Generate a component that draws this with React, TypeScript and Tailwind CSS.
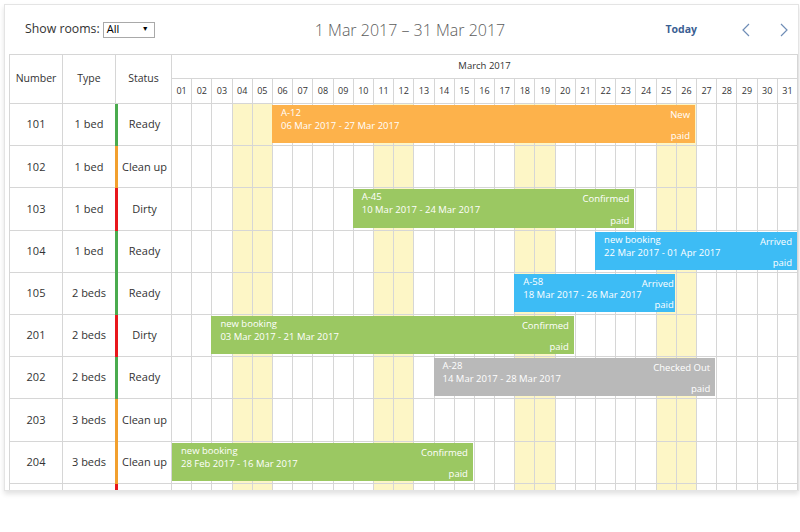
import React from 'react';

type Tone = 'orange' | 'green' | 'blue' | 'gray';
type Status = 'Ready' | 'Clean up' | 'Dirty';

interface Booking {
  title: string;
  dates: string;
  start: number; // first day of March (0 = Feb 28)
  end: number; // checkout day, exclusive (32 = Apr 1)
  label: string;
  tone: Tone;
}

interface Room {
  number: string;
  type: string;
  status: Status;
  booking?: Booking;
  hideText?: boolean;
}

const DAYS = Array.from({ length: 31 }, (_, i) => i + 1);
const WEEKEND = new Set([4, 5, 11, 12, 18, 19, 25, 26]);
const TIMELINE_W = 626;
const DAY_W = TIMELINE_W / 31;

const toneClass: Record<Tone, string> = {
  orange: 'bg-[#fdb24b]',
  green: 'bg-[#9bc862]',
  blue: 'bg-[#3dbcf5]',
  gray: 'bg-[#b9b9b9]',
};

const statusBar: Record<Status, string> = {
  Ready: 'bg-[#4aab4e]',
  'Clean up': 'bg-[#f2a02e]',
  Dirty: 'bg-[#e8171c]',
};

const rooms: Room[] = [
  { number: '101', type: '1 bed', status: 'Ready', booking: { title: 'A-12', dates: '06 Mar 2017 - 27 Mar 2017', start: 6, end: 27, label: 'New', tone: 'orange' } },
  { number: '102', type: '1 bed', status: 'Clean up' },
  { number: '103', type: '1 bed', status: 'Dirty', booking: { title: 'A-45', dates: '10 Mar 2017 - 24 Mar 2017', start: 10, end: 24, label: 'Confirmed', tone: 'green' } },
  { number: '104', type: '1 bed', status: 'Ready', booking: { title: 'new booking', dates: '22 Mar 2017 - 01 Apr 2017', start: 22, end: 32, label: 'Arrived', tone: 'blue' } },
  { number: '105', type: '2 beds', status: 'Ready', booking: { title: 'A-58', dates: '18 Mar 2017 - 26 Mar 2017', start: 18, end: 26, label: 'Arrived', tone: 'blue' } },
  { number: '201', type: '2 beds', status: 'Dirty', booking: { title: 'new booking', dates: '03 Mar 2017 - 21 Mar 2017', start: 3, end: 21, label: 'Confirmed', tone: 'green' } },
  { number: '202', type: '2 beds', status: 'Ready', booking: { title: 'A-28', dates: '14 Mar 2017 - 28 Mar 2017', start: 14, end: 28, label: 'Checked Out', tone: 'gray' } },
  { number: '203', type: '3 beds', status: 'Clean up' },
  { number: '204', type: '3 beds', status: 'Clean up', booking: { title: 'new booking', dates: '28 Feb 2017 - 16 Mar 2017', start: 0, end: 16, label: 'Confirmed', tone: 'green' } },
  // scrolled past the bottom edge, only the top sliver shows
  { number: '205', type: '3 beds', status: 'Dirty', hideText: true },
];

const Chevron = ({ dir }: { dir: 'left' | 'right' }) => (
  <svg width="10" height="14" viewBox="0 0 10 14" fill="none">
    <polyline
      points={dir === 'left' ? '8,1 2,7 8,13' : '2,1 8,7 2,13'}
      stroke="#6f8db6"
      strokeWidth="1.2"
      strokeLinejoin="miter"
    />
  </svg>
);

const BookingBar = ({ b }: { b: Booking }) => {
  const left = b.start < 1 ? 0 : (b.start - 1) * DAY_W - 1;
  const right = b.end > 31 ? TIMELINE_W - 1 : (b.end - 1) * DAY_W - 2;
  return (
    <div
      className={`absolute top-[1px] bottom-[3px] z-10 flex justify-between overflow-hidden pl-[9px] pr-[5px] text-[9.5px] leading-[13px] text-white ${toneClass[b.tone]}`}
      style={{ left, width: right - left }}
    >
      <div className="whitespace-nowrap pt-[1px]">
        <div>{b.title}</div>
        <div>{b.dates}</div>
      </div>
      <div className="flex flex-col items-end justify-between whitespace-nowrap pb-[1px] pt-[3px]">
        <div>{b.label}</div>
        <div>paid</div>
      </div>
    </div>
  );
};

const RoomRow = ({ room }: { room: Room }) => (
  <div className="flex h-[42.2px] shrink-0 text-[11px] text-[#333]">
    <div className="flex w-[53px] items-center justify-center border-b border-r border-[#d6d6d6]">
      {!room.hideText && room.number}
    </div>
    <div className="flex w-[52px] items-center justify-center border-b border-[#d6d6d6]">
      {!room.hideText && room.type}
    </div>
    <div className="flex w-[57px]">
      <div className={`w-[3px] ${statusBar[room.status]}`} />
      <div className="flex flex-1 items-center justify-center whitespace-nowrap border-b border-r border-[#d6d6d6]">
        {!room.hideText && room.status}
      </div>
    </div>
    <div className="relative grid w-[626px] grid-cols-[repeat(31,minmax(0,1fr))]">
      {DAYS.map((d) => (
        <div
          key={d}
          className={`border-b border-r border-[#d6d6d6] ${WEEKEND.has(d) ? 'bg-[#fdf6c6]' : 'bg-white'}`}
        />
      ))}
      {room.booking && <BookingBar b={room.booking} />}
    </div>
  </div>
);

export default function App() {
  return (
    <div className="h-[532px] w-[800px] bg-white pl-[4px] pt-[4px] font-['Open_Sans',sans-serif]">
      <div className="flex h-[487px] w-[795px] flex-col overflow-hidden border border-[#e4e4e4] bg-white pl-[4px] shadow-[0_3px_5px_rgba(0,0,0,0.12)]">
        {/* toolbar */}
        <div className="flex h-[49px] shrink-0 items-center">
          <div className="flex w-[291px] items-center pl-[16px] text-[12.3px] text-[#333]">
            <span>Show rooms:</span>
            <div className="ml-[3px] flex h-[16px] w-[52px] items-center justify-between border border-[#a9a9a9] pl-[3px] pr-[5px] text-[11px] text-black">
              <span>All</span>
              <span className="text-[7px]">▼</span>
            </div>
          </div>
          <div className="w-[220px] text-center text-[16px] font-light text-[#5c5c5c]">1 Mar 2017 – 31 Mar 2017</div>
          <div className="flex flex-1 items-center justify-end">
            <span className="text-[10.5px] font-bold text-[#3b5f93]">Today</span>
            <div className="ml-[35px] flex h-[28px] w-[28px] items-center justify-center">
              <Chevron dir="left" />
            </div>
            <div className="ml-[10px] flex h-[28px] w-[28px] items-center justify-center">
              <Chevron dir="right" />
            </div>
          </div>
        </div>

        {/* grid */}
        <div className="flex w-[789px] flex-col border-l border-t border-[#d6d6d6]">
          <div className="flex h-[49px] shrink-0 text-[10.5px] text-[#333]">
            <div className="flex w-[53px] items-center justify-center border-b border-r border-[#d6d6d6]">Number</div>
            <div className="flex w-[53px] items-center justify-center border-b border-r border-[#d6d6d6]">Type</div>
            <div className="flex w-[56px] items-center justify-center border-b border-r border-[#d6d6d6]">Status</div>
            <div className="flex w-[626px] flex-col">
              <div className="flex h-[24px] items-center justify-center border-b border-r border-[#d6d6d6] text-[9.5px]">
                March 2017
              </div>
              <div className="grid h-[25px] grid-cols-[repeat(31,minmax(0,1fr))] text-[9px]">
                {DAYS.map((d) => (
                  <div key={d} className="flex items-center justify-center border-b border-r border-[#d6d6d6]">
                    {String(d).padStart(2, '0')}
                  </div>
                ))}
              </div>
            </div>
          </div>
          {rooms.map((r) => (
            <RoomRow key={r.number} room={r} />
          ))}
        </div>
      </div>
    </div>
  );
}
